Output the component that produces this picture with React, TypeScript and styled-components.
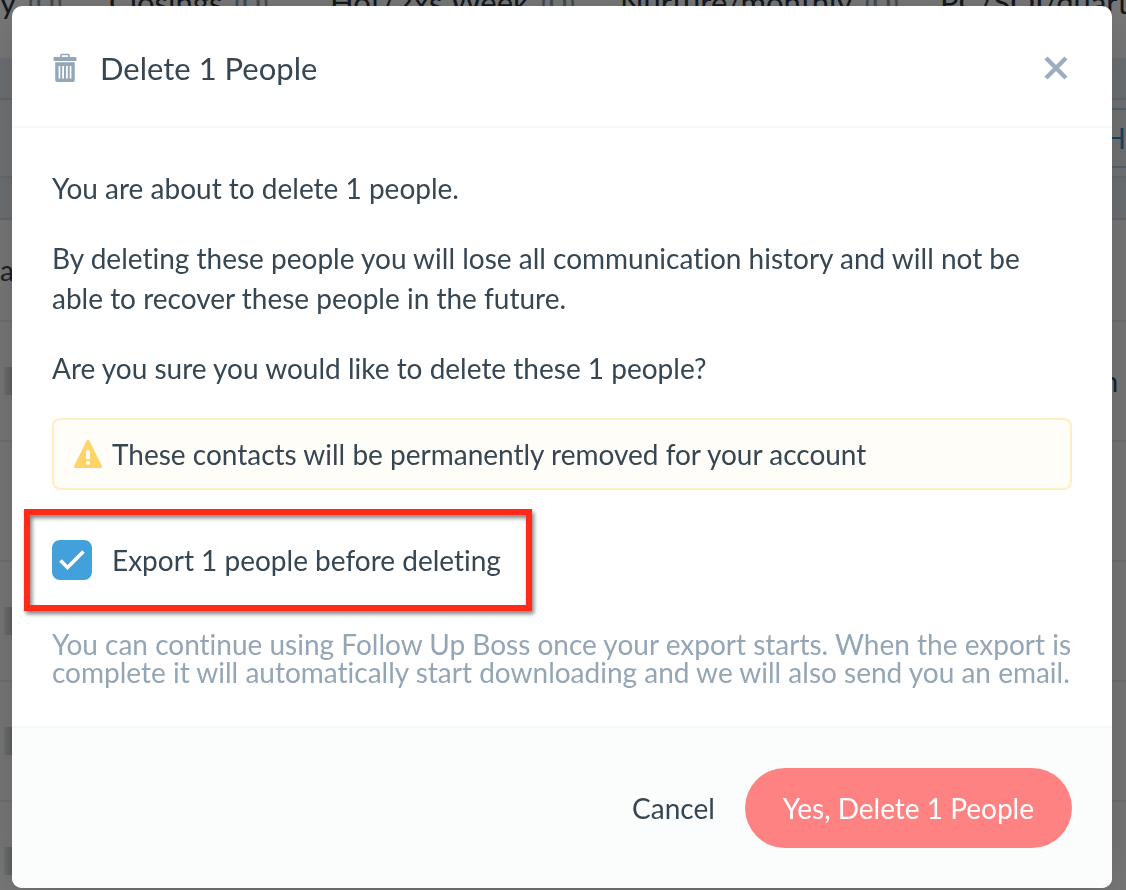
import React from 'react';
import styled, { createGlobalStyle } from 'styled-components';

const GlobalStyle = createGlobalStyle`
  *, *::before, *::after { box-sizing: border-box; }
  body {
    margin: 0;
    background: #f4f4f4;
    color: #364652;
    font-family: Lato, "Liberation Sans", sans-serif;
    font-size: 28px;
    font-variant-ligatures: none;
    line-height: 40px;
  }
  p, h2 { margin: 0; }
`;

const Page = styled.div`
  height: 100vh;
  overflow: hidden;
`;

const StageBar = styled.nav`
  display: flex;
  align-items: flex-end;
  gap: 60px;
  height: 58px;
  padding: 0 0 36px;
  white-space: nowrap;
  color: #27333d;
  font-size: 31px;
`;

const Stage = styled.span<{ $width: number }>`
  flex: 0 0 ${(p) => p.$width}px;
  min-width: 0;
`;

const Count = styled.span`
  margin-left: 12px;
  color: #8796a6;
`;

const Band = styled.div<{ $height: number }>`
  height: ${(p) => p.$height}px;
  background: #dfe5ea;
  border-bottom: 2px solid #d0d6db;
`;

const FilterBar = styled.div`
  display: flex;
  justify-content: flex-end;
  align-items: center;
  height: 78px;
  background: #e6eaed;
  border-bottom: 2px solid #d5d9dc;
`;

const FilterTag = styled.span`
  height: 60px;
  padding: 8px 0 0 60px;
  overflow: hidden;
  border: solid #a6cde4;
  border-width: 2px 0;
  color: #2f8cc4;
`;

const PersonRow = styled.div<{ $height: number }>`
  display: flex;
  justify-content: space-between;
  align-items: center;
  height: ${(p) => p.$height}px;
  padding: 0 8px 0 0;
  border-bottom: 2px solid #e6e6e6;
`;

const Redacted = styled.span`
  width: 28px;
  height: 28px;
  margin-left: 4px;
  background: linear-gradient(90deg, #e4e6e6, #b4bcc0 10px);
`;

const Backdrop = styled.div`
  position: fixed;
  inset: 0;
  padding: 6px 14px 2px 12px;
  overflow: auto;
  background: rgba(0, 0, 0, 0.5);
`;

const Dialog = styled.section`
  border-radius: 10px;
  background: #fff;
  box-shadow: 0 10px 60px rgba(0, 0, 0, 0.22);
`;

const Header = styled.header`
  display: flex;
  align-items: center;
  gap: 22px;
  height: 122px;
  padding: 4px 40px 0;
  border-bottom: 2px solid #f8f9f9;
`;

const Title = styled.h2`
  flex: 1;
  font-size: 31px;
  font-weight: 400;
`;

const CloseButton = styled.button`
  display: flex;
  padding: 4px;
  border: 0;
  background: none;
  color: #9bafc0;
  cursor: pointer;
`;

const Content = styled.div`
  padding: 40px;
`;

const Copy = styled.p`
  margin-bottom: 30px;
`;

const Alert = styled.div`
  display: flex;
  align-items: center;
  gap: 10px;
  min-height: 72px;
  margin-bottom: 50px;
  padding: 0 20px;
  border: 2px solid #ffedc4;
  border-radius: 8px;
  background: #fffdf7;
`;

const ExportOption = styled.label`
  position: relative;
  display: flex;
  align-items: center;
  gap: 20px;
  width: fit-content;
  height: 40px;
  margin-bottom: 50px;
  cursor: pointer;

  &::after {
    content: "";
    position: absolute;
    inset: -31px -31px -31px -28px;
    border: 6px solid #ff2a1a;
    filter: drop-shadow(2px 3px 2px rgba(0, 0, 0, 0.5));
    pointer-events: none;
  }
`;

const CheckBoxFrame = styled.span`
  display: grid;
  width: 40px;
  height: 40px;

  > * { grid-area: 1 / 1; }
  > svg { pointer-events: none; }
`;

const CheckBox = styled.input`
  appearance: none;
  width: 40px;
  height: 40px;
  margin: 0;
  border: 2px solid #42a1da;
  border-radius: 8px;
  background: #fff;

  &:checked { background: #42a1da; }
`;

const Hint = styled.p`
  color: #94a5b5;
  line-height: 28px;
`;

const Footer = styled.footer`
  display: flex;
  justify-content: flex-end;
  align-items: center;
  gap: 30px;
  padding: 40px;
  border-top: 2px solid #f7f9f9;
  border-radius: 0 0 10px 10px;
  background: #fbfdfd;
`;

const Button = styled.button<{ $danger?: boolean }>`
  height: 80px;
  padding: ${(p) => (p.$danger ? '0 38px' : '0')};
  border: 0;
  border-radius: 40px;
  background: ${(p) => (p.$danger ? '#ff8282' : 'none')};
  color: ${(p) => (p.$danger ? '#fff' : 'inherit')};
  font: inherit;
  cursor: pointer;
`;

const TrashIcon = () => (
  <svg width="26" height="30" viewBox="0 0 26 30" aria-hidden="true">
    <path d="M9 5V2.2Q9 1.5 9.7 1.5H16.3Q17 1.5 17 2.2V5" fill="none" stroke="#94a7b7" strokeWidth="1.6" />
    <rect x="1.5" y="4" width="23" height="4" rx="0.8" fill="#94a7b7" />
    <path
      fillRule="evenodd"
      fill="#94a7b7"
      d="M3.2 9.3H22.8V27Q22.8 29 20.8 29H5.2Q3.2 29 3.2 27ZM6.6 13V25.6H8.3V13ZM10.2 13V25.6H12V13ZM14 13V25.6H15.8V13ZM17.7 13V25.6H19.4V13Z"
    />
  </svg>
);

const CloseIcon = () => (
  <svg width="24" height="24" viewBox="0 0 24 24" aria-hidden="true">
    <path d="M2 2L22 22M22 2L2 22" stroke="currentColor" strokeWidth="4.4" />
  </svg>
);

const WarningIcon = () => (
  <svg width="28" height="28" viewBox="0 0 28 28" aria-hidden="true">
    <path d="M14 1.5L26.5 26.5H1.5Z" fill="#ffd466" stroke="#ffd466" strokeWidth="3" strokeLinejoin="round" />
    <path d="M14 12V17.5" stroke="#fff" strokeWidth="4" strokeLinecap="round" />
    <circle cx="14" cy="23" r="2" fill="#fff" />
  </svg>
);

const CheckIcon = () => (
  <svg width="40" height="40" viewBox="0 0 40 40" aria-hidden="true">
    <path d="M8.5 20.5L15.5 27.5L31.5 11.5" fill="none" stroke="#fff" strokeWidth="3.6" />
  </svg>
);

const stages = [
  { name: 'y', width: 49 },
  { name: 'Closings', width: 161 },
  { name: 'Hot/2xs Week', width: 230 },
  { name: 'Nurture/monthly', width: 260 },
  { name: 'PC/SOI/quarterly', width: 260 },
];

export default function App() {
  return (
    <>
      <GlobalStyle />
      <Page aria-hidden="true">
        <StageBar>
          {stages.map((s) => (
            <Stage key={s.name} $width={s.width}>
              {s.name}
              <Count>(0)</Count>
            </Stage>
          ))}
        </StageBar>
        <Band $height={42} />
        <FilterBar>
          <FilterTag>H</FilterTag>
        </FilterBar>
        <Band $height={42} />
        <PersonRow $height={102}>a</PersonRow>
        <PersonRow $height={120}>
          <Redacted />n
        </PersonRow>
        <PersonRow $height={120} />
        <PersonRow $height={120}>
          <Redacted />
        </PersonRow>
        <PersonRow $height={120}>
          <Redacted />
        </PersonRow>
        <PersonRow $height={120}>
          <Redacted />
        </PersonRow>
      </Page>
      <Backdrop>
        <Dialog role="dialog" aria-modal="true" aria-labelledby="delete-title">
          <Header>
            <TrashIcon />
            <Title id="delete-title">Delete 1 People</Title>
            <CloseButton type="button" aria-label="Close">
              <CloseIcon />
            </CloseButton>
          </Header>
          <Content>
            <Copy>You are about to delete 1 people.</Copy>
            <Copy>
              By deleting these people you will lose all communication history and will not be
              able to recover these people in the future.
            </Copy>
            <Copy>Are you sure you would like to delete these 1 people?</Copy>
            <Alert role="alert">
              <WarningIcon />
              These contacts will be permanently removed for your account
            </Alert>
            <ExportOption>
              <CheckBoxFrame>
                <CheckBox type="checkbox" defaultChecked />
                <CheckIcon />
              </CheckBoxFrame>
              Export 1 people before deleting
            </ExportOption>
            <Hint>
              You can continue using Follow Up Boss once your export starts. When the export is
              complete it will automatically start downloading and we will also send you an email.
            </Hint>
          </Content>
          <Footer>
            <Button type="button">Cancel</Button>
            <Button type="button" $danger>Yes, Delete 1 People</Button>
          </Footer>
        </Dialog>
      </Backdrop>
    </>
  );
}
